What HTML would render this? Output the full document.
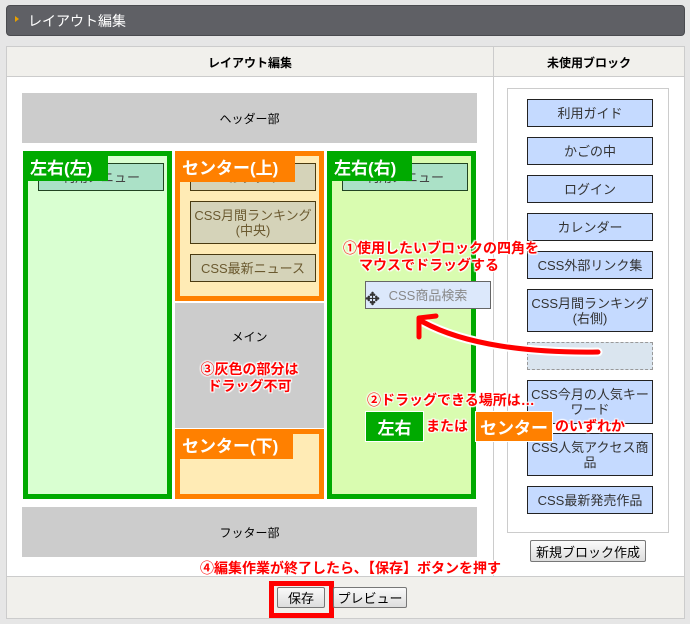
<!DOCTYPE html>
<html><head><meta charset="utf-8"><style>
*{margin:0;padding:0;box-sizing:border-box}
body{width:690px;height:624px;background:#e6e6e6;position:relative;overflow:hidden;font-family:"Liberation Sans","Noto Sans CJK JP",sans-serif;font-size:12px;color:#000}
.a{position:absolute}
.blk{position:absolute;border:1px solid #222;display:flex;align-items:center;justify-content:center;text-align:center;line-height:15px;font-size:13px}
.cb{background:#c5daff;color:#333;left:527px;width:126px}
.ob{background:#d5d3b9;border-color:#4a3a10;color:#6b5a30;left:190px;width:126px}
.gb{background:#abe1c7;border-color:#224422;color:#444}
.lab{position:absolute;color:#fff;font-weight:bold;font-size:17px;display:flex;align-items:center;padding-left:7px}
.red{position:absolute;color:#f00;font-weight:bold;font-size:14px;line-height:17px;text-shadow:0 0 2px #fff,0 0 2px #fff,1px 1px 1px #fff,-1px -1px 1px #fff,1px -1px 1px #fff,-1px 1px 1px #fff;white-space:nowrap}
.btn{position:absolute;border:1px solid #777;border-radius:2px;background:linear-gradient(#fafafa,#ddd);font-size:13px;display:flex;align-items:center;justify-content:center}
</style></head><body>
<div class="a" style="left:6px;top:5px;width:679px;height:31px;background:#5f6065;border-radius:4px;border:1px solid #4a4b4f"></div>
<div class="a" style="left:15px;top:16px;width:0;height:0;border-left:4px solid #e8a000;border-top:3px solid transparent;border-bottom:3px solid transparent"></div>
<div class="a" style="left:28px;top:11px;color:#fff;font-size:14px">レイアウト編集</div>

<div class="a" style="left:6px;top:46px;width:679px;height:573px;background:#fff;border:1px solid #ccc"></div>
<div class="a" style="left:7px;top:47px;width:677px;height:30px;background:#f1f0ec;border-bottom:1px solid #ccc"></div>
<div class="a" style="left:493px;top:47px;width:1px;height:530px;background:#ccc"></div>
<div class="a" style="left:7px;top:576px;width:677px;height:42px;background:#f1f0ec;border-top:1px solid #ccc"></div>
<div class="a" style="left:7px;top:54px;width:486px;text-align:center;font-weight:bold;font-size:12px">レイアウト編集</div>
<div class="a" style="left:494px;top:54px;width:190px;text-align:center;font-weight:bold;font-size:12px">未使用ブロック</div>

<div class="a" style="left:22px;top:93px;width:455px;height:50px;background:#ccc;display:flex;align-items:center;justify-content:center">ヘッダー部</div>
<div class="a" style="left:22px;top:507px;width:455px;height:50px;background:#ccc;display:flex;align-items:center;justify-content:center">フッター部</div>

<div class="a" style="left:23px;top:151px;width:149px;height:348px;background:#d9ffd1;border:5px solid #00aa00"></div>
<div class="blk gb" style="left:38px;top:163px;width:126px;height:28px">利用メニュー</div>
<div class="lab" style="left:23px;top:151px;width:85px;height:30px;background:#00aa00">左右(左)</div>

<div class="a" style="left:175px;top:151px;width:149px;height:150px;background:#ffebb5;border:5px solid #ff8000"></div>
<div class="blk ob" style="top:163px;height:28px">おすすめ</div>
<div class="blk ob" style="top:201px;height:43px">CSS月間ランキング<br>(中央)</div>
<div class="blk ob" style="top:254px;height:28px">CSS最新ニュース</div>
<div class="lab" style="left:175px;top:151px;width:120px;height:31px;background:#ff8000">センター(上)</div>
<div class="a" style="left:175px;top:303px;width:149px;height:125px;background:#ccc"></div>
<div class="a" style="left:175px;top:328px;width:149px;text-align:center">メイン</div>
<div class="a" style="left:175px;top:429px;width:149px;height:70px;background:#ffebb5;border:5px solid #ff8000"></div>
<div class="lab" style="left:175px;top:429px;width:118px;height:30px;background:#ff8000">センター(下)</div>
<div class="red" style="left:175px;top:361px;width:149px;text-align:center">③灰色の部分は<br>ドラッグ不可</div>

<div class="a" style="left:327px;top:151px;width:149px;height:348px;background:#d9fcb0;border:5px solid #00aa00"></div>
<div class="blk gb" style="left:342px;top:163px;width:126px;height:28px">利用メニュー</div>
<div class="lab" style="left:327px;top:151px;width:85px;height:30px;background:#00aa00">左右(右)</div>

<div class="a" style="left:507px;top:88px;width:162px;height:445px;border:1px solid #ccc;background:#fff"></div>
<div class="blk cb" style="top:99px;height:28px">利用ガイド</div>
<div class="blk cb" style="top:137px;height:28px">かごの中</div>
<div class="blk cb" style="top:175px;height:28px">ログイン</div>
<div class="blk cb" style="top:213px;height:28px">カレンダー</div>
<div class="blk cb" style="top:251px;height:28px">CSS外部リンク集</div>
<div class="blk cb" style="top:289px;height:43px">CSS月間ランキング<br>(右側)</div>
<div class="a" style="left:527px;top:342px;width:126px;height:28px;background:#dae5ef;border:1px dashed #999"></div>
<div class="blk cb" style="top:380px;height:44px">CSS今月の人気キー<br>ワード</div>
<div class="blk cb" style="top:433px;height:43px">CSS人気アクセス商<br>品</div>
<div class="blk cb" style="top:486px;height:28px">CSS最新発売作品</div>
<div class="btn" style="left:530px;top:540px;width:116px;height:22px">新規ブロック作成</div>

<div class="blk" style="left:365px;top:281px;width:126px;height:28px;background:#dce8fb;border-color:#666;color:#888">CSS商品検索</div>
<div class="a" style="left:365px;top:290px;color:#333;font-size:18px;line-height:18px">✥</div>
<svg class="a" style="left:0;top:0" width="690" height="624">
<path d="M598 352 C530 353 465 345 423 322" stroke="#fff" stroke-width="9" fill="none" stroke-linecap="round"/>
<path d="M598 352 C530 353 465 345 423 322" stroke="#f00" stroke-width="5" fill="none" stroke-linecap="round"/>
<path d="M419 337 L419 318 L436 316" stroke="#f00" stroke-width="5" fill="none" stroke-linecap="round" stroke-linejoin="round"/>
</svg>
<div class="red" style="left:343px;top:240px;">①使用したいブロックの四角を</div>
<div class="red" style="left:359px;top:257px;">マウスでドラッグする</div>
<div class="red" style="left:367px;top:392px;">②ドラッグできる場所は…</div>
<div class="a" style="left:365px;top:411px;width:59px;height:31px;background:#00aa00;border:1px solid #fff;color:#fff;font-weight:bold;font-size:17px;display:flex;align-items:center;justify-content:center">左右</div>
<div class="red" style="left:426px;top:418px;">または</div>
<div class="a" style="left:475px;top:411px;width:78px;height:31px;background:#ff8000;border:1px solid #fff;color:#fff;font-weight:bold;font-size:17px;display:flex;align-items:center;justify-content:center">センター</div>
<div class="red" style="left:555px;top:418px;">のいずれか</div>
<div class="red" style="left:200px;top:560px;">④編集作業が終了したら､【保存】ボタンを押す</div>

<div class="a" style="left:269px;top:581px;width:65px;height:37px;border:5px solid #f00"></div>
<div class="btn" style="left:277px;top:587px;width:48px;height:21px">保存</div>
<div class="btn" style="left:333px;top:587px;width:74px;height:21px">プレビュー</div>
</body></html>
